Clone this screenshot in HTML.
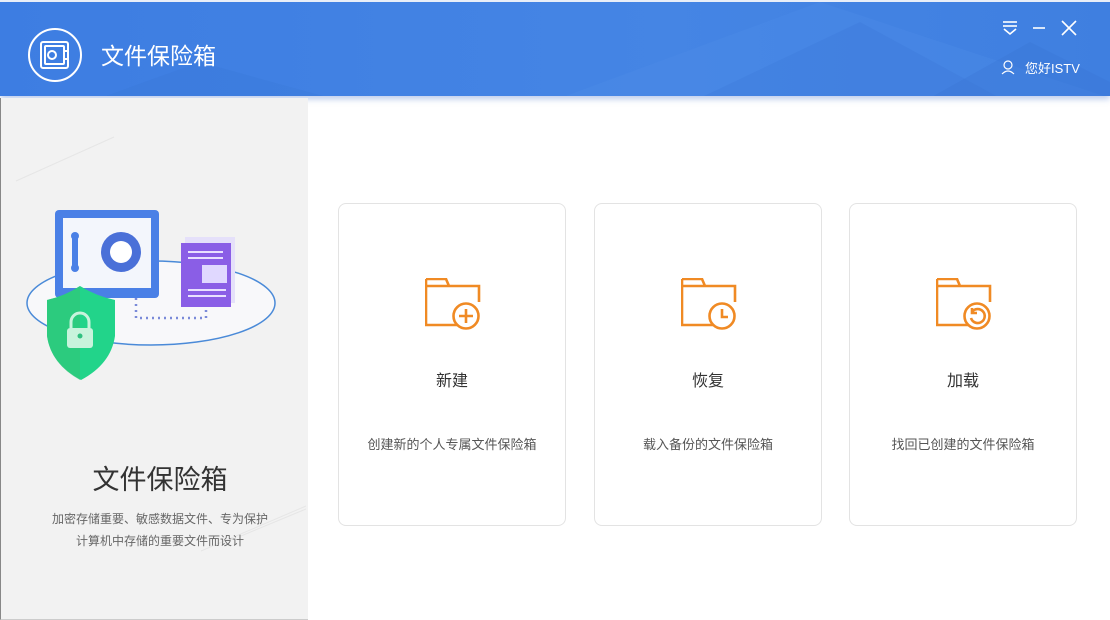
<!DOCTYPE html>
<html><head><meta charset="utf-8">
<style>
*{margin:0;padding:0;box-sizing:border-box}
body{width:1110px;height:620px;overflow:hidden;font-family:"Liberation Sans","Noto Sans CJK SC",sans-serif;background:#fff;position:relative}
.hdr{position:absolute;left:0;top:0;width:1110px;height:96px;background:linear-gradient(90deg,#3d7de2,#4585e4 60%,#3f7fe0);overflow:hidden;box-shadow:0 3px 6px rgba(60,110,200,.35);border-top:2px solid #e8eef8}
.left{position:absolute;left:0;top:98px;width:308px;height:522px;background:#f2f2f2;border-left:1px solid #888;border-bottom:1px solid #ccc}
.card{position:absolute;top:203px;width:228px;height:323px;border:1px solid #e3e3e3;border-radius:8px;background:#fff;text-align:center}
.card .t{position:absolute;top:163px;left:0;right:0;font-size:16px;color:#333}
.card .d{position:absolute;top:230px;left:0;right:0;font-size:13px;color:#555}
.card svg{position:absolute;left:86px;top:74px}
</style></head><body>
<div class="hdr">
<svg width="1110" height="96" style="position:absolute;left:0;top:0">
<polygon points="100,96 200,60 330,96" fill="#3a78d8" opacity=".35"/>
<polygon points="560,96 820,0 1110,96" fill="#4d8ce8" opacity=".35"/>
<polygon points="700,96 860,20 1000,96" fill="#3a78d8" opacity=".3"/>
<polygon points="930,96 1030,40 1110,80 1110,96" fill="#3a76d4" opacity=".35"/>
</svg>
<svg width="56" height="56" style="position:absolute;left:27px;top:25px" fill="none" stroke="#fff" stroke-width="2">
<circle cx="28" cy="28" r="26"/>
<rect x="14" y="15" width="27" height="26" rx="2"/>
<rect x="18" y="19" width="19" height="18" rx="1"/>
<circle cx="25" cy="28" r="4"/>
<line x1="37" y1="24" x2="41" y2="24"/><line x1="37" y1="32" x2="41" y2="32"/>
</svg>
<div style="position:absolute;left:101px;top:35px;font-size:23px;color:#fff">文件保险箱</div>
<svg width="90" height="20" style="position:absolute;left:1000px;top:16px" fill="none" stroke="#fff" stroke-width="1.6">
<line x1="3" y1="4" x2="17" y2="4"/><line x1="3" y1="8" x2="17" y2="8"/><polyline points="4,11 10,16 16,11"/>
<line x1="33" y1="10" x2="45" y2="10"/>
<line x1="62" y1="3" x2="76" y2="17"/><line x1="76" y1="3" x2="62" y2="17"/>
</svg>
<svg width="16" height="16" style="position:absolute;left:1000px;top:57px" fill="none" stroke="#fff" stroke-width="1.2">
<circle cx="8" cy="6" r="4"/><path d="M2 15 Q8 9 14 15"/>
</svg>
<div style="position:absolute;left:1025px;top:56px;font-size:13px;color:#fff">您好ISTV</div>
</div>
<div class="left">
<svg width="308" height="522" style="position:absolute;left:0;top:-2px">
<line x1="15" y1="85" x2="113" y2="41" stroke="#e6e6e6"/>
<line x1="200" y1="455" x2="305" y2="410" stroke="#e6e6e6"/>
<line x1="240" y1="440" x2="305" y2="413" stroke="#e6e6e6"/>
<ellipse cx="150" cy="207" rx="124" ry="42" fill="#f8f8fa" stroke="#4a8ad8" stroke-width="1.5"/>
<rect x="54" y="114" width="104" height="88" rx="4" fill="#4a80e6"/>
<rect x="62" y="122" width="88" height="70" fill="#f3f6fc"/>
<rect x="71" y="137" width="6" height="38" rx="3" fill="#4a80e6"/>
<circle cx="74" cy="140" r="4" fill="#4a80e6"/><circle cx="74" cy="172" r="4" fill="#4a80e6"/>
<circle cx="120" cy="156" r="20" fill="#4a70d8"/><circle cx="120" cy="156" r="11" fill="#fff"/>
<polyline points="135,202 135,222 205,222 205,210" fill="none" stroke="#7a8ad8" stroke-width="2.5" stroke-dasharray="2,4"/>
<rect x="184" y="141" width="50" height="66" fill="#e5e0fa"/>
<rect x="180" y="147" width="50" height="64" fill="#8a5ee6"/>
<rect x="187" y="155" width="35" height="2" fill="#e8e0ff"/><rect x="187" y="161" width="35" height="2" fill="#e8e0ff"/>
<rect x="201" y="169" width="25" height="18" fill="#e0d8ff"/>
<rect x="187" y="193" width="38" height="2" fill="#e8e0ff"/><rect x="187" y="199" width="38" height="2" fill="#e8e0ff"/>
<path d="M46 204 Q64 200 79 190 Q95 200 114 204 L114 240 Q110 268 80 284 Q50 268 46 240 Z" fill="#22d48a"/>
<path d="M46 204 Q64 200 79 190 L79 284 Q50 268 46 240 Z" fill="#34c476" opacity=".6"/>
<rect x="66" y="232" width="26" height="20" rx="3" fill="#c8f3dc"/>
<path d="M70 232 v-6 a9 9 0 0 1 18 0 v6" fill="none" stroke="#c8f3dc" stroke-width="3"/>
<circle cx="79" cy="240" r="2.5" fill="#30c080"/>
</svg>
<div style="position:absolute;left:0;width:318px;top:360px;text-align:center;font-size:27px;color:#333">文件保险箱</div>
<div style="position:absolute;left:0;width:318px;top:410px;text-align:center;font-size:12px;color:#666;line-height:22px">加密存储重要、敏感数据文件、专为保护<br>计算机中存储的重要文件而设计</div>
</div>
<div class="card" style="left:338px">
<svg width="58" height="56" fill="none" stroke="#f08a24" stroke-width="2.6"><path d="M1 1 H21 L24 8 H54 V24 M32 47 H1 V1 M1 8 H24"/><circle cx="41" cy="38" r="12.5"/><path d="M41 31 V45 M34 38 H48"/></svg>
<div class="t">新建</div><div class="d">创建新的个人专属文件保险箱</div></div>
<div class="card" style="left:594px">
<svg width="58" height="56" fill="none" stroke="#f08a24" stroke-width="2.6"><path d="M1 1 H21 L24 8 H54 V24 M32 47 H1 V1 M1 8 H24"/><circle cx="41" cy="38" r="12.5"/><path d="M41 31 V39 H47"/></svg>
<div class="t">恢复</div><div class="d">载入备份的文件保险箱</div></div>
<div class="card" style="left:849px">
<svg width="58" height="56" fill="none" stroke="#f08a24" stroke-width="2.6"><path d="M1 1 H21 L24 8 H54 V24 M32 47 H1 V1 M1 8 H24"/><circle cx="41" cy="38" r="12.5"/><path d="M36 34 A7 7 0 1 1 35 40 M36 30 V35 H41"/></svg>
<div class="t">加载</div><div class="d">找回已创建的文件保险箱</div></div>
</body></html>
